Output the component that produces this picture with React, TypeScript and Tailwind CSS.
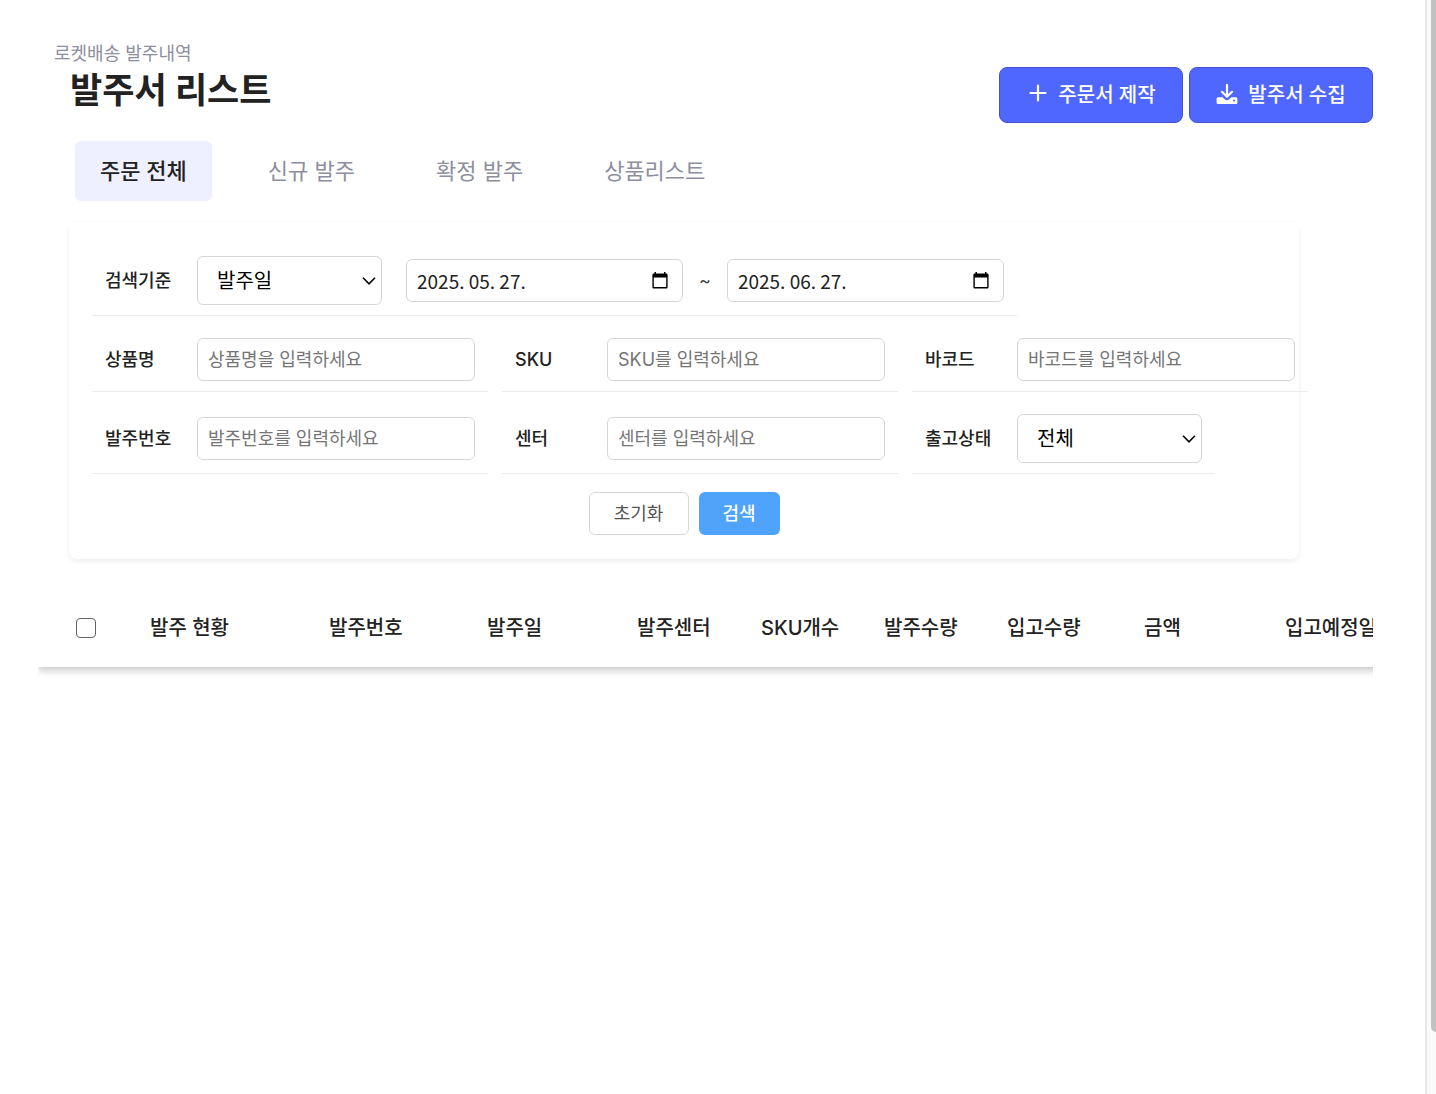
import React from 'react';

const tabs = ['주문 전체', '신규 발주', '확정 발주', '상품리스트'];

const columns = [
  { label: '발주 현황', width: 'w-[179px]' },
  { label: '발주번호', width: 'w-[158px]' },
  { label: '발주일', width: 'w-[150px]' },
  { label: '발주센터', width: 'w-[124px]' },
  { label: 'SKU개수', width: 'w-[123px]' },
  { label: '발주수량', width: 'w-[123px]' },
  { label: '입고수량', width: 'w-[137px]' },
  { label: '금액', width: 'w-[141px]' },
  { label: '입고예정일', width: 'w-[160px]' },
];

const inputClass =
  'h-[43px] w-[278px] rounded-md border border-[#d6d6d6] bg-white px-2.5 text-lg text-[#222222] placeholder:text-[#757575]';

interface FieldProps {
  id: string;
  label: string;
  children: React.ReactNode;
}

const Field: React.FC<FieldProps> = ({ id, label, children }) => (
  <div className="flex shrink-0 items-center gap-3 border-b border-[#ececec] px-[13px] py-2.5">
    <label htmlFor={id} className="w-20 shrink-0 text-lg/6 font-medium whitespace-nowrap text-[#222222]">
      {label}
    </label>
    {children}
  </div>
);

const TextField: React.FC<{ id: string; label: string; placeholder: string }> = ({ id, label, placeholder }) => (
  <Field id={id} label={label}>
    <input id={id} type="text" placeholder={placeholder} className={inputClass} />
  </Field>
);

const SelectBox: React.FC<{ id: string; options: string[] }> = ({ id, options }) => (
  <div className="relative">
    <select
      id={id}
      className="h-[49px] w-[185px] appearance-none rounded-md border border-[#d6d6d6] bg-white pr-8 pl-[19px] text-xl text-black"
    >
      {options.map(option => (
        <option key={option}>{option}</option>
      ))}
    </select>
    <svg
      className="pointer-events-none absolute top-5 right-1.5 h-2.5 w-3.5"
      viewBox="0 0 14 10"
      fill="none"
      stroke="black"
      strokeWidth={1.6}
    >
      <path d="M1 1.8L7 7.8L13 1.8" />
    </svg>
  </div>
);

const DateBox: React.FC<{ id: string; label: string; value: string }> = ({ id, label, value }) => (
  <div className="relative">
    <input
      id={id}
      type="text"
      aria-label={label}
      defaultValue={value}
      className="h-[43px] w-[277px] rounded-md border border-[#d6d6d6] bg-white px-2.5 font-['Noto_Sans_CJK_KR',sans-serif] text-[19px] text-[#222222]"
    />
    <button type="button" aria-label={`${label} 선택`} className="absolute top-3 right-3.5">
      <svg className="h-[18px] w-[18px]" viewBox="0 0 18 18" fill="none">
        <path
          fill="black"
          fillRule="evenodd"
          d="M3.5 1H5V2.5H13V1H14.5V2.5H15.3C16 2.5 16.6 3.1 16.6 3.8V16.2C16.6 16.9 16 17.5 15.3 17.5H2.7C2 17.5 1.4 16.9 1.4 16.2V3.8C1.4 3.1 2 2.5 2.7 2.5H3.5V1ZM2.8 6.5V16.1H15.2V6.5H2.8Z"
        />
      </svg>
    </button>
  </div>
);

const actionClass =
  'flex h-14 w-[184px] items-center justify-center gap-2.5 rounded-lg border border-[#4453cf] bg-[#4f67ff] text-xl font-medium text-white';

const App: React.FC = () => {
  return (
    <div className="flex min-h-screen overflow-hidden bg-white font-[Inter,'Noto_Sans_CJK_KR',sans-serif] text-[#222222]">
      <main className="min-w-0 flex-1 pt-10 pr-[52px] pl-[38px]">
        {/* 상단 */}
        <header className="flex justify-between">
          <div>
            <p className="pl-4 text-lg/7 text-[#8d8ea0]">로켓배송 발주내역</p>
            <h1 className="pl-8 text-[35px]/11 font-bold">발주서 리스트</h1>
          </div>
          <div className="flex gap-1.5 pt-[27px]">
            <button type="button" className={actionClass}>
              <svg className="h-[22px] w-[22px]" viewBox="0 0 22 22" fill="none" stroke="currentColor" strokeWidth={2.2} strokeLinecap="round">
                <path d="M12 1.5V16.5M4.5 9H19.5" />
              </svg>
              주문서 제작
            </button>
            <button type="button" className={actionClass}>
              <svg className="h-[22px] w-[22px]" viewBox="0 0 22 22" fill="none" stroke="currentColor" strokeWidth={2.2} strokeLinecap="round" strokeLinejoin="round">
                <path d="M11 1V12.5M6 7.8L11 12.8L16 7.8" />
                <path
                  fill="currentColor"
                  stroke="none"
                  fillRule="evenodd"
                  d="M2.2 13.2H6.6L9 15.4C10.1 16.4 11.9 16.4 13 15.4L15.4 13.2H19.8C20.7 13.2 21.4 13.9 21.4 14.8V18.4C21.4 19.3 20.7 20 19.8 20H2.2C1.3 20 0.6 19.3 0.6 18.4V14.8C0.6 13.9 1.3 13.2 2.2 13.2ZM18 15.4A1 1 0 1 0 18 17.4A1 1 0 1 0 18 15.4Z"
                />
              </svg>
              발주서 수집
            </button>
          </div>
        </header>

        {/* 탭 */}
        <nav className="mt-[18px] flex gap-[31px] pl-[37px]">
          {tabs.map((tab, index) => (
            <button
              key={tab}
              type="button"
              className={
                index === 0
                  ? 'h-[60px] rounded-md bg-[#eeefff] px-[25px] text-[22px] font-medium text-[#222222]'
                  : 'h-[60px] rounded-md px-[25px] text-[22px] text-[#8d8ea0]'
              }
            >
              {tab}
            </button>
          ))}
        </nav>

        {/* 검색 조건 */}
        <form className="mt-[21px] mr-[74px] ml-[31px] rounded-lg bg-white px-[23px] py-6 shadow-[0_2px_5px_rgba(0,0,0,0.08)]">
          <div className="flex flex-col gap-3">
            <div className="flex">
              <Field id="criteria" label="검색기준">
                <SelectBox id="criteria" options={['발주일', '입고예정일']} />
                <div className="ml-3 flex items-center gap-4">
                  <DateBox id="from" label="시작일" value="2025. 05. 27." />
                  <span className="text-lg/6 text-[#444444]">~</span>
                  <DateBox id="to" label="종료일" value="2025. 06. 27." />
                </div>
              </Field>
            </div>
            <div className="flex gap-3.5">
              <TextField id="product" label="상품명" placeholder="상품명을 입력하세요" />
              <TextField id="sku" label="SKU" placeholder="SKU를 입력하세요" />
              <TextField id="barcode" label="바코드" placeholder="바코드를 입력하세요" />
            </div>
            <div className="flex gap-3.5">
              <TextField id="order" label="발주번호" placeholder="발주번호를 입력하세요" />
              <TextField id="center" label="센터" placeholder="센터를 입력하세요" />
              <Field id="status" label="출고상태">
                <SelectBox id="status" options={['전체', '출고대기', '출고완료']} />
              </Field>
            </div>
          </div>
          <div className="mt-[18px] flex justify-center gap-2.5">
            <button type="reset" className="h-[43px] w-[100px] rounded-md border border-[#d6d6d6] bg-white text-lg text-[#555555]">
              초기화
            </button>
            <button type="button" className="h-[43px] w-[81px] rounded-md bg-[#4fa3fb] text-lg font-medium text-white">
              검색
            </button>
          </div>
        </form>

        {/* 발주 목록 */}
        <div className="mt-[30px] overflow-hidden pb-4">
          <table className="w-[1407px] table-fixed text-left shadow-[0_3px_8px_rgba(0,0,0,0.24)]">
            <thead className="bg-white">
              <tr className="h-[78px]">
                <th className="w-28 pl-[38px]">
                  <input
                    type="checkbox"
                    aria-label="전체 선택"
                    className="block h-5 w-5 appearance-none rounded border border-[#666666] bg-white checked:bg-[#4f67ff]"
                  />
                </th>
                {columns.map(({ label, width }) => (
                  <th key={label} className={`${width} text-xl font-medium whitespace-nowrap`}>
                    {label}
                  </th>
                ))}
              </tr>
            </thead>
          </table>
        </div>
      </main>

      <div className="flex w-[11px] shrink-0 justify-end border-l-2 border-[#e8e8e8] bg-[#fafafa]">
        <div className="h-[calc(100vh-62px)] w-[5px] rounded-bl-md bg-[#c1c1c1]" />
      </div>
    </div>
  );
};

export default App;
